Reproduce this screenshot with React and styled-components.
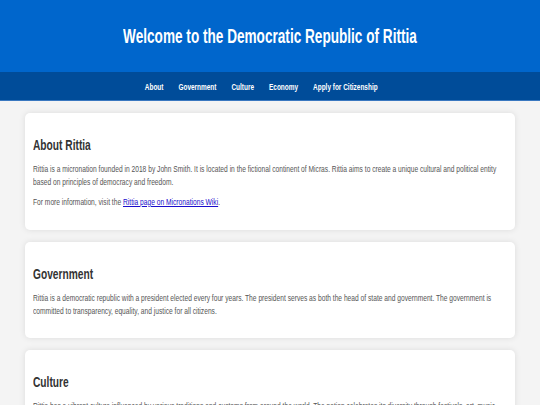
import React from "react";
import styled, { createGlobalStyle, css } from "styled-components";

// the screenshot's type is narrow; no narrow face is installed, so squeeze it
const SQUEEZE = 0.68;

const condensed = css`
  width: calc(100% / ${SQUEEZE});
  transform: scaleX(${SQUEEZE});
  transform-origin: left top;
`;

const GlobalStyle = createGlobalStyle`
  html, body {
    margin: 0;
    padding: 0;
    background-color: #f4f4f4;
    font-family: "Liberation Sans", Arial, sans-serif;
    color: #333;
  }
`;

const Header = styled.header`
  background-color: #0066cc;
  color: #fff;
  height: 72px;
  display: flex;
  align-items: center;
  justify-content: center;
`;

const H1 = styled.h1`
  margin: 0;
  font-size: 20px;
  font-weight: bold;
  white-space: nowrap;
  transform: scaleX(${SQUEEZE});
`;

const Nav = styled.nav`
  background-color: #004c99;
  height: 29px;
  display: flex;
  align-items: center;
  justify-content: center;
  padding-right: 17px;
  border-bottom: 1px solid #3a78c0;
  box-sizing: border-box;
`;

const NavList = styled.div`
  display: flex;
  gap: 22px;
  white-space: nowrap;
  transform: scaleX(${SQUEEZE});
`;

const NavLink = styled.a`
  color: #fff;
  text-decoration: none;
  font-size: 9.5px;
  font-weight: bold;
`;

const Main = styled.main`
  padding: 12px 25px;
  display: flex;
  flex-direction: column;
  gap: 12px;
`;

const Section = styled.section`
  background-color: #fff;
  border-radius: 5px;
  box-shadow: 0 0 6px rgba(0, 0, 0, 0.1);
  padding: 23px 8px ${(p) => p.$bottom || 22}px;
`;

const H2 = styled.h2`
  ${condensed}
  margin: 0 0 8px;
  font-size: 15px;
  line-height: 18px;
  font-weight: bold;
  color: #333;
`;

const P = styled.p`
  ${condensed}
  margin: 0 0 7px;
  font-size: 9.8px;
  line-height: 13px;
  color: #555;
  &:last-child {
    margin-bottom: 0;
  }
`;

const Link = styled.a`
  color: #1a0dcc;
  text-decoration: underline;
`;

const App = () => {
  return (
    <div>
      <GlobalStyle />
      <Header>
        <H1>Welcome to the Democratic Republic of Rittia</H1>
      </Header>
      <Nav>
        <NavList>
          <NavLink href="#about">About</NavLink>
          <NavLink href="#government">Government</NavLink>
          <NavLink href="#culture">Culture</NavLink>
          <NavLink href="#economy">Economy</NavLink>
          <NavLink href="#citizenship">Apply for Citizenship</NavLink>
        </NavList>
      </Nav>
      <Main>
        <Section id="about">
          <H2>About Rittia</H2>
          <P>
            Rittia is a micronation founded in 2018 by John Smith. It is located in the fictional
            continent of Micras. Rittia aims to create a unique cultural and political entity based
            on principles of democracy and freedom.
          </P>
          <P>
            For more information, visit the{" "}
            <Link href="#wiki">Rittia page on Micronations Wiki</Link>.
          </P>
        </Section>
        <Section id="government" $bottom={21}>
          <H2>Government</H2>
          <P>
            Rittia is a democratic republic with a president elected every four years. The president
            serves as both the head of state and government. The government is committed to
            transparency, equality, and justice for all citizens.
          </P>
        </Section>
        <Section id="culture">
          <H2>Culture</H2>
          <P>
            Rittia has a vibrant culture influenced by various traditions and customs from around the
            world. The nation celebrates its diversity through festivals, art, music and literature. The
            people of Rittia take pride in their heritage and traditions.
          </P>
        </Section>
      </Main>
    </div>
  );
};

export default App;
